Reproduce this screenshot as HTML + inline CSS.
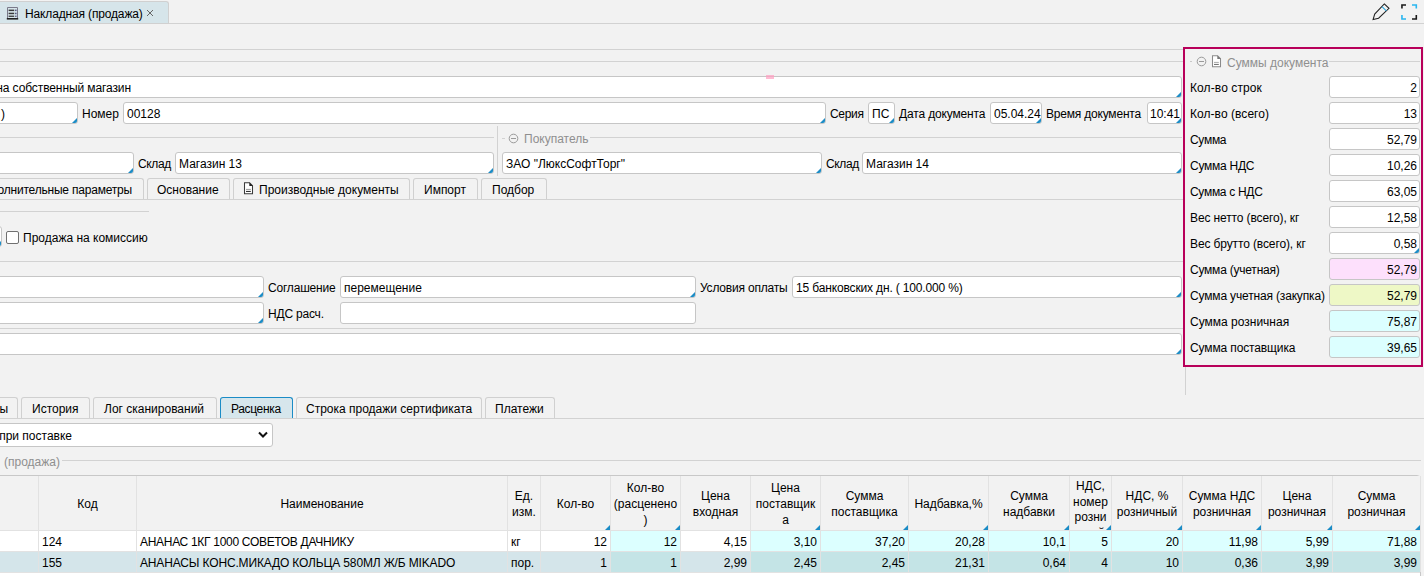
<!DOCTYPE html><html><head><meta charset="utf-8"><style>
*{box-sizing:border-box;margin:0;padding:0}
html,body{width:1424px;height:576px;overflow:hidden;background:#f2f2f2}
body{font-family:"Liberation Sans",sans-serif;font-size:12px;color:#000;position:relative}
.a{position:absolute}
.f{position:absolute;border:1px solid #c6c6c6;border-radius:3px;white-space:nowrap;overflow:hidden;padding-top:1px!important}
.c{position:absolute;right:0;bottom:0;width:0;height:0;border-style:solid;border-width:0 0 5px 5px;border-color:transparent transparent #1b8cc6 transparent}
.l{position:absolute;white-space:nowrap;line-height:16px;height:16px}
.tab{position:absolute;border:1px solid #d0d0d0;border-bottom:none;border-radius:3px 3px 0 0;background:#f2f2f2}
.tab.act{border-color:#1b8cc6;background:#d6e6ec}
.g{color:#8f8f8f}
td,th{font-weight:normal}
</style></head><body>
<div class="a" style="left:-6px;top:1px;width:175px;height:23px;background:#d6e5ea;border:1px solid #d0d0d0;border-bottom:none;border-radius:0 3px 0 0"></div><svg class="a" style="left:6px;top:7px" width="13" height="13" viewBox="0 0 13 13">
<path d="M1.5 11.5V0.5H11.5V11.5" fill="none" stroke="#7a7a8a" stroke-width="1"/>
<rect x="2.6" y="2.6" width="5.6" height="1.5" fill="#3a3a3a"/><rect x="9.2" y="2.6" width="1.3" height="1.5" fill="#3a3a6a"/>
<rect x="2.6" y="5.7" width="5.6" height="1.5" fill="#3a3a3a"/><rect x="9.2" y="5.7" width="1.3" height="1.5" fill="#3a3a6a"/>
<rect x="2.6" y="8.6" width="5.6" height="1.3" fill="#3a3a3a"/><rect x="9.2" y="8.6" width="1.3" height="1.3" fill="#3a3a6a"/>
<rect x="0.8" y="11" width="11.4" height="1.6" fill="#222"/>
</svg><div class="l" style="left:25px;top:6px;color:#000;letter-spacing:-0.15px">Накладная (продажа)</div><svg class="a" style="left:146px;top:9px" width="8" height="8" viewBox="0 0 8 8"><path d="M1 1L7 7M7 1L1 7" stroke="#666" stroke-width="1"/></svg><div class="a" style="left:169px;top:23px;width:1255px;height:1px;background:#d2d2d2"></div><div class="a" style="left:0px;top:23px;width:169px;height:1px;background:#d0d0d0"></div><svg class="a" style="left:1372px;top:3px" width="19" height="18" viewBox="0 0 19 18">
<path d="M12.3 0.9 L17 5.3 L6.6 15.2 L1.1 16.5 L2.7 11.1 Z" fill="none" stroke="#222" stroke-width="1.05" stroke-linejoin="miter"/>
<path d="M10 3.6 L14.3 7.8" stroke="#29a8e0" stroke-width="1.05"/>
</svg><svg class="a" style="left:1400px;top:3px" width="19" height="18" viewBox="0 0 19 18">
<path d="M1.95 5.6 V1.95 H6" fill="none" stroke="#1a1a1a" stroke-width="1.6"/>
<path d="M12 1.95 H16.3 V5.6" fill="none" stroke="#29b6f0" stroke-width="1.6"/>
<path d="M1.95 12.1 V16.05 H6" fill="none" stroke="#29b6f0" stroke-width="1.6"/>
<path d="M12 16.05 H16.3 V12.1" fill="none" stroke="#1a1a1a" stroke-width="1.6"/>
</svg><div class="a" style="left:0px;top:49px;width:1183px;height:1px;background:#d2d2d2"></div><div class="a" style="left:0px;top:61px;width:1183px;height:1px;background:#d2d2d2"></div><div class="f" style="left:-3px;top:76px;width:1185px;height:22px;background:#fff;line-height:20px;text-align:left;padding:0 3px;"><i class="c"></i></div><div class="l" style="right:1293px;top:80px;letter-spacing:-0.1px">на собственный магазин</div><div class="a" style="left:766px;top:75px;width:8px;height:4px;background:#ff9ec0;opacity:.7"></div><div class="f" style="left:-3px;top:102px;width:81px;height:22px;background:#fff;line-height:20px;text-align:left;padding:0 3px;"><i class="c"></i></div><div class="l" style="left:1px;top:106px;color:#000;">)</div><div class="l" style="left:82px;top:106px;color:#000;">Номер</div><div class="f" style="left:123px;top:102px;width:703px;height:22px;background:#fff;line-height:20px;text-align:left;padding:0 3px;">00128<i class="c"></i></div><div class="l" style="left:830px;top:106px;color:#000;letter-spacing:-0.3px">Серия</div><div class="f" style="left:868px;top:102px;width:27px;height:22px;background:#fff;line-height:20px;text-align:left;padding:0 3px;">ПС<i class="c"></i></div><div class="l" style="left:899px;top:106px;color:#000;letter-spacing:-0.15px">Дата документа</div><div class="f" style="left:990px;top:102px;width:52px;height:22px;background:#fff;line-height:20px;text-align:left;padding:0 3px;">05.04.24<i class="c"></i></div><div class="l" style="left:1046px;top:106px;color:#000;letter-spacing:-0.2px">Время документа</div><div class="f" style="left:1147px;top:102px;width:35px;height:22px;background:#fff;line-height:20px;text-align:left;padding:0 2px;">10:41<i class="c"></i></div><div class="a" style="left:0px;top:137px;width:494px;height:1px;background:#d2d2d2"></div><div class="a" style="left:497px;top:126px;width:1px;height:50px;background:#d2d2d2"></div><div class="a" style="left:502px;top:138px;width:3px;height:1px;background:#d2d2d2"></div><svg class="a" style="left:508px;top:133px" width="11" height="11" viewBox="0 0 11 11"><circle cx="5.5" cy="5.5" r="4.3" fill="none" stroke="#9a9a9a" stroke-width="1"/><path d="M3 5.5H8" stroke="#9a9a9a" stroke-width="1"/></svg><div class="l" style="left:524px;top:131px;color:#8f8f8f;">Покупатель</div><div class="a" style="left:590px;top:137px;width:592px;height:1px;background:#d2d2d2"></div><div class="f" style="left:-3px;top:152px;width:137px;height:22px;background:#fff;line-height:20px;text-align:left;padding:0 3px;"><i class="c"></i></div><div class="l" style="left:138px;top:156px;color:#000;letter-spacing:-0.35px">Склад</div><div class="f" style="left:175px;top:152px;width:319px;height:22px;background:#fff;line-height:20px;text-align:left;padding:0 3px;">Магазин 13<i class="c"></i></div><div class="f" style="left:502px;top:152px;width:320px;height:22px;background:#fff;line-height:20px;text-align:left;padding:0 3px;">ЗАО "ЛюксСофтТорг"<i class="c"></i></div><div class="l" style="left:826px;top:156px;color:#000;letter-spacing:-0.35px">Склад</div><div class="f" style="left:862px;top:152px;width:320px;height:22px;background:#fff;line-height:20px;text-align:left;padding:0 3px;">Магазин 14<i class="c"></i></div><div class="tab" style="left:-3px;top:178px;width:147px;height:22px"></div><div class="l" style="right:1292px;top:182px;letter-spacing:-0.2px">Дополнительные параметры</div><div class="tab" style="left:147px;top:178px;width:83px;height:22px"></div><div class="l" style="left:157px;top:182px;color:#000;">Основание</div><div class="tab" style="left:233px;top:178px;width:177px;height:22px"></div><svg class="a" style="left:243px;top:182px" width="11" height="13" viewBox="0 0 11 13">
<path d="M1.5 0.7H6.6L9.5 3.6V11.8H1.5Z" fill="#fff" stroke="#3a3a3a" stroke-width="1.05"/><path d="M6.3 0.4V3.9H9.8Z" fill="#222"/>
<rect x="3" y="6.9" width="4.8" height="1" fill="#999"/><rect x="3" y="8.9" width="4.8" height="1.1" fill="#333"/></svg><div class="l" style="left:259px;top:182px;color:#000;">Производные документы</div><div class="tab" style="left:413px;top:178px;width:65px;height:22px"></div><div class="l" style="left:424px;top:182px;color:#000;">Импорт</div><div class="tab" style="left:481px;top:178px;width:66px;height:22px"></div><div class="l" style="left:492px;top:182px;color:#000;">Подбор</div><div class="a" style="left:0px;top:199px;width:1183px;height:1px;background:#d2d2d2"></div><div class="a" style="left:0px;top:211px;width:149px;height:1px;background:#d2d2d2"></div><div class="f" style="left:-12px;top:226px;width:14px;height:21px;background:#fff;line-height:19px;text-align:left;padding:0 3px;"><i class="c"></i></div><div class="a" style="left:6px;top:231px;width:13px;height:13px;border:1px solid #707070;border-radius:2px;background:#fff"></div><div class="l" style="left:23px;top:230px;color:#000;">Продажа на комиссию</div><div class="a" style="left:0px;top:261px;width:1183px;height:1px;background:#d2d2d2"></div><div class="f" style="left:-3px;top:276px;width:267px;height:22px;background:#fff;line-height:20px;text-align:left;padding:0 3px;"><i class="c"></i></div><div class="l" style="left:268px;top:280px;color:#000;letter-spacing:-0.2px">Соглашение</div><div class="f" style="left:340px;top:276px;width:356px;height:22px;background:#fff;line-height:20px;text-align:left;padding:0 3px;">перемещение<i class="c"></i></div><div class="l" style="left:700px;top:280px;color:#000;letter-spacing:-0.2px">Условия оплаты</div><div class="f" style="left:792px;top:276px;width:390px;height:22px;background:#fff;line-height:20px;text-align:left;padding:0 3px;"><span style="letter-spacing:-0.15px">15 банковских дн. ( 100.000 %)</span><i class="c"></i></div><div class="f" style="left:-3px;top:302px;width:267px;height:22px;background:#fff;line-height:20px;text-align:left;padding:0 3px;"><i class="c"></i></div><div class="l" style="left:268px;top:306px;color:#000;letter-spacing:-0.2px">НДС расч.</div><div class="f" style="left:340px;top:302px;width:356px;height:22px;background:#fff;line-height:20px;text-align:left;padding:0 3px;"></div><div class="a" style="left:0px;top:328px;width:1183px;height:1px;background:#d2d2d2"></div><div class="f" style="left:-3px;top:333px;width:1185px;height:22px;background:#fff;line-height:20px;text-align:left;padding:0 3px;"><i class="c"></i></div><div class="a" style="left:1185px;top:366px;width:1px;height:29px;background:#d2d2d2"></div><div class="tab" style="left:-3px;top:397px;width:21px;height:22px"></div><div class="l" style="right:1416px;top:401px;">ы</div><div class="tab" style="left:21px;top:397px;width:69px;height:22px"></div><div class="l" style="left:32px;top:401px;color:#000;">История</div><div class="tab" style="left:93px;top:397px;width:124px;height:22px"></div><div class="l" style="left:104px;top:401px;color:#000;">Лог сканирований</div><div class="tab act" style="left:220px;top:397px;width:73px;height:22px"></div><div class="l" style="left:231px;top:401px;color:#000;letter-spacing:-0.35px">Расценка</div><div class="tab" style="left:296px;top:397px;width:186px;height:22px"></div><div class="l" style="left:306px;top:401px;color:#000;">Строка продажи сертификата</div><div class="tab" style="left:485px;top:397px;width:70px;height:22px"></div><div class="l" style="left:495px;top:401px;color:#000;">Платежи</div><div class="a" style="left:0px;top:418px;width:1424px;height:1px;background:#d2d2d2"></div><div class="f" style="left:-3px;top:423px;width:276px;height:24px;background:#fff;line-height:22px;text-align:left;padding:0 3px;"></div><div class="l" style="right:1352px;top:428px;">при поставке</div><svg class="a" style="left:258px;top:431px" width="10" height="8" viewBox="0 0 10 8"><path d="M1 1.5L5 5.5L9 1.5" fill="none" stroke="#111" stroke-width="2"/></svg><div class="l" style="left:4px;top:454px;color:#8f8f8f;">(продажа)</div><div class="a" style="left:62px;top:460px;width:1359px;height:1px;background:#d2d2d2"></div><div class="a" style="left:1183px;top:47px;width:240px;height:320px;border:2px solid #b8005a"></div><div class="a" style="left:1190px;top:61px;width:2px;height:1px;background:#c8c8c8"></div><svg class="a" style="left:1196px;top:56px" width="11" height="11" viewBox="0 0 11 11"><circle cx="5.5" cy="5.5" r="4.3" fill="none" stroke="#9a9a9a" stroke-width="1"/><path d="M3 5.5H8" stroke="#9a9a9a" stroke-width="1"/></svg><svg class="a" style="left:1211px;top:55px" width="11" height="13" viewBox="0 0 11 13">
<path d="M1.5 0.7H6.6L9.5 3.6V11.8H1.5Z" fill="#fff" stroke="#8a8a8a" stroke-width="1.05"/><path d="M6.3 0.4V3.9H9.8Z" fill="#777"/>
<rect x="3" y="6.9" width="4.8" height="1" fill="#aaa"/><rect x="3" y="8.9" width="4.8" height="1.1" fill="#777"/></svg><div class="l" style="left:1227px;top:55px;color:#8f8f8f;">Суммы документа</div><div class="a" style="left:1329px;top:61px;width:91px;height:1px;background:#d2d2d2"></div><div class="l" style="left:1190px;top:80px;color:#000;letter-spacing:0.1px">Кол-во строк</div><div class="f" style="left:1329px;top:76px;width:91px;height:22px;background:#fff;line-height:20px;text-align:right;padding:0 2px;">2</div><div class="l" style="left:1190px;top:106px;color:#000;letter-spacing:0.05px">Кол-во (всего)</div><div class="f" style="left:1329px;top:102px;width:91px;height:22px;background:#fff;line-height:20px;text-align:right;padding:0 2px;">13</div><div class="l" style="left:1190px;top:132px;color:#000;letter-spacing:-0.3px">Сумма</div><div class="f" style="left:1329px;top:128px;width:91px;height:22px;background:#fff;line-height:20px;text-align:right;padding:0 2px;">52,79</div><div class="l" style="left:1190px;top:158px;color:#000;letter-spacing:-0.25px">Сумма НДС</div><div class="f" style="left:1329px;top:154px;width:91px;height:22px;background:#fff;line-height:20px;text-align:right;padding:0 2px;">10,26</div><div class="l" style="left:1190px;top:184px;color:#000;letter-spacing:-0.3px">Сумма с НДС</div><div class="f" style="left:1329px;top:180px;width:91px;height:22px;background:#fff;line-height:20px;text-align:right;padding:0 2px;">63,05</div><div class="l" style="left:1190px;top:210px;color:#000;letter-spacing:-0.12px">Вес нетто (всего), кг</div><div class="f" style="left:1329px;top:206px;width:91px;height:22px;background:#fff;line-height:20px;text-align:right;padding:0 2px;">12,58</div><div class="l" style="left:1190px;top:236px;color:#000;letter-spacing:-0.12px">Вес брутто (всего), кг</div><div class="f" style="left:1329px;top:232px;width:91px;height:22px;background:#fff;line-height:20px;text-align:right;padding:0 2px;">0,58<i class="c"></i></div><div class="l" style="left:1190px;top:262px;color:#000;letter-spacing:-0.22px">Сумма (учетная)</div><div class="f" style="left:1329px;top:258px;width:91px;height:22px;background:#fde0fc;line-height:20px;text-align:right;padding:0 2px;">52,79</div><div class="l" style="left:1190px;top:288px;color:#000;letter-spacing:-0.16px">Сумма учетная (закупка)</div><div class="f" style="left:1329px;top:284px;width:91px;height:22px;background:#eef8c6;line-height:20px;text-align:right;padding:0 2px;">52,79</div><div class="l" style="left:1190px;top:314px;color:#000;letter-spacing:0.0px">Сумма розничная</div><div class="f" style="left:1329px;top:310px;width:91px;height:22px;background:#dcffff;line-height:20px;text-align:right;padding:0 2px;">75,87</div><div class="l" style="left:1190px;top:340px;color:#000;letter-spacing:-0.13px">Сумма поставщика</div><div class="f" style="left:1329px;top:336px;width:91px;height:22px;background:#dcffff;line-height:20px;text-align:right;padding:0 2px;">39,65</div><div class="a" style="left:-10px;top:475px;width:1431px;height:110px;background:#fff;border:1px solid #c8c8c8;border-radius:0 4px 0 0"></div><div class="a" style="left:0;top:476px;width:1420px;height:55px;background:#f2f2f2"></div><div class="a" style="left:-39px;top:476px;width:77px;height:54px;padding-top:2px;display:flex;align-items:center;justify-content:center;text-align:center;line-height:16px;overflow:hidden"></div><div class="a" style="left:-39px;top:531px;width:77px;height:20px;background:#fff;line-height:20px;text-align:right;padding:1px 3px 0;white-space:nowrap;overflow:hidden"></div><div class="a" style="left:-39px;top:552px;width:77px;height:20px;background:#d4e5ea;line-height:20px;text-align:right;padding:1px 3px 0;white-space:nowrap;overflow:hidden"></div><div class="a" style="left:38px;top:476px;width:1px;height:96px;background:#e2e2e2"></div><div class="a" style="left:39px;top:476px;width:97px;height:54px;padding-top:2px;display:flex;align-items:center;justify-content:center;text-align:center;line-height:16px;overflow:hidden">Код</div><div class="a" style="left:39px;top:531px;width:97px;height:20px;background:#fff;line-height:20px;text-align:left;padding:1px 3px 0;white-space:nowrap;overflow:hidden">124</div><div class="a" style="left:39px;top:552px;width:97px;height:20px;background:#d4e5ea;line-height:20px;text-align:left;padding:1px 3px 0;white-space:nowrap;overflow:hidden">155</div><div class="a" style="left:136px;top:476px;width:1px;height:96px;background:#e2e2e2"></div><div class="a" style="left:137px;top:476px;width:370px;height:54px;padding-top:2px;display:flex;align-items:center;justify-content:center;text-align:center;line-height:16px;overflow:hidden">Наименование</div><div class="a" style="left:137px;top:531px;width:370px;height:20px;background:#fff;line-height:20px;text-align:left;padding:1px 3px 0;white-space:nowrap;overflow:hidden"><span style="letter-spacing:-0.3px">АНАНАС 1КГ 1000 СОВЕТОВ ДАЧНИКУ</span></div><div class="a" style="left:137px;top:552px;width:370px;height:20px;background:#d4e5ea;line-height:20px;text-align:left;padding:1px 3px 0;white-space:nowrap;overflow:hidden"><span style="letter-spacing:-0.15px">АНАНАСЫ КОНС.МИКАДО КОЛЬЦА 580МЛ Ж/Б MIKADO</span></div><div class="a" style="left:507px;top:476px;width:1px;height:96px;background:#e2e2e2"></div><div class="a" style="left:508px;top:476px;width:32px;height:54px;padding-top:2px;display:flex;align-items:center;justify-content:center;text-align:center;line-height:16px;overflow:hidden">Ед.<br>изм.</div><div class="a" style="left:508px;top:531px;width:32px;height:20px;background:#fff;line-height:20px;text-align:left;padding:1px 3px 0;white-space:nowrap;overflow:hidden">кг</div><div class="a" style="left:508px;top:552px;width:32px;height:20px;background:#d4e5ea;line-height:20px;text-align:left;padding:1px 3px 0;white-space:nowrap;overflow:hidden">пор.</div><div class="a" style="left:540px;top:476px;width:1px;height:96px;background:#e2e2e2"></div><div class="a" style="left:541px;top:476px;width:69px;height:54px;padding-top:2px;display:flex;align-items:center;justify-content:center;text-align:center;line-height:16px;overflow:hidden">Кол-во</div><i class="c" style="left:605px;top:525px;right:auto;bottom:auto"></i><div class="a" style="left:541px;top:531px;width:69px;height:20px;background:#fff;line-height:20px;text-align:right;padding:1px 3px 0;white-space:nowrap;overflow:hidden">12</div><div class="a" style="left:541px;top:552px;width:69px;height:20px;background:#d4e5ea;line-height:20px;text-align:right;padding:1px 3px 0;white-space:nowrap;overflow:hidden">1</div><div class="a" style="left:610px;top:476px;width:1px;height:96px;background:#e2e2e2"></div><div class="a" style="left:611px;top:476px;width:69px;height:54px;padding-top:2px;display:flex;align-items:center;justify-content:center;text-align:center;line-height:16px;overflow:hidden">Кол-во<br>(расценено<br>)</div><i class="c" style="left:675px;top:525px;right:auto;bottom:auto"></i><div class="a" style="left:611px;top:531px;width:69px;height:20px;background:#dcffff;line-height:20px;text-align:right;padding:1px 3px 0;white-space:nowrap;overflow:hidden">12</div><div class="a" style="left:611px;top:552px;width:69px;height:20px;background:#c4e4e6;line-height:20px;text-align:right;padding:1px 3px 0;white-space:nowrap;overflow:hidden">1</div><div class="a" style="left:680px;top:476px;width:1px;height:96px;background:#e2e2e2"></div><div class="a" style="left:681px;top:476px;width:69px;height:54px;padding-top:2px;display:flex;align-items:center;justify-content:center;text-align:center;line-height:16px;overflow:hidden">Цена<br>входная</div><div class="a" style="left:681px;top:531px;width:69px;height:20px;background:#fff;line-height:20px;text-align:right;padding:1px 3px 0;white-space:nowrap;overflow:hidden">4,15</div><div class="a" style="left:681px;top:552px;width:69px;height:20px;background:#d4e5ea;line-height:20px;text-align:right;padding:1px 3px 0;white-space:nowrap;overflow:hidden">2,99</div><div class="a" style="left:750px;top:476px;width:1px;height:96px;background:#e2e2e2"></div><div class="a" style="left:751px;top:476px;width:69px;height:54px;padding-top:2px;display:flex;align-items:center;justify-content:center;text-align:center;line-height:16px;overflow:hidden">Цена<br>поставщик<br>а</div><i class="c" style="left:815px;top:525px;right:auto;bottom:auto"></i><div class="a" style="left:751px;top:531px;width:69px;height:20px;background:#dcffff;line-height:20px;text-align:right;padding:1px 3px 0;white-space:nowrap;overflow:hidden">3,10</div><div class="a" style="left:751px;top:552px;width:69px;height:20px;background:#c4e4e6;line-height:20px;text-align:right;padding:1px 3px 0;white-space:nowrap;overflow:hidden">2,45</div><div class="a" style="left:820px;top:476px;width:1px;height:96px;background:#e2e2e2"></div><div class="a" style="left:821px;top:476px;width:87px;height:54px;padding-top:2px;display:flex;align-items:center;justify-content:center;text-align:center;line-height:16px;overflow:hidden">Сумма<br>поставщика</div><i class="c" style="left:903px;top:525px;right:auto;bottom:auto"></i><div class="a" style="left:821px;top:531px;width:87px;height:20px;background:#dcffff;line-height:20px;text-align:right;padding:1px 3px 0;white-space:nowrap;overflow:hidden">37,20</div><div class="a" style="left:821px;top:552px;width:87px;height:20px;background:#c4e4e6;line-height:20px;text-align:right;padding:1px 3px 0;white-space:nowrap;overflow:hidden">2,45</div><div class="a" style="left:908px;top:476px;width:1px;height:96px;background:#e2e2e2"></div><div class="a" style="left:909px;top:476px;width:79px;height:54px;padding-top:2px;display:flex;align-items:center;justify-content:center;text-align:center;line-height:16px;overflow:hidden">Надбавка,%</div><i class="c" style="left:983px;top:525px;right:auto;bottom:auto"></i><div class="a" style="left:909px;top:531px;width:79px;height:20px;background:#dcffff;line-height:20px;text-align:right;padding:1px 3px 0;white-space:nowrap;overflow:hidden">20,28</div><div class="a" style="left:909px;top:552px;width:79px;height:20px;background:#c4e4e6;line-height:20px;text-align:right;padding:1px 3px 0;white-space:nowrap;overflow:hidden">21,31</div><div class="a" style="left:988px;top:476px;width:1px;height:96px;background:#e2e2e2"></div><div class="a" style="left:989px;top:476px;width:80px;height:54px;padding-top:2px;display:flex;align-items:center;justify-content:center;text-align:center;line-height:16px;overflow:hidden">Сумма<br>надбавки</div><i class="c" style="left:1064px;top:525px;right:auto;bottom:auto"></i><div class="a" style="left:989px;top:531px;width:80px;height:20px;background:#dcffff;line-height:20px;text-align:right;padding:1px 3px 0;white-space:nowrap;overflow:hidden">10,1</div><div class="a" style="left:989px;top:552px;width:80px;height:20px;background:#c4e4e6;line-height:20px;text-align:right;padding:1px 3px 0;white-space:nowrap;overflow:hidden">0,64</div><div class="a" style="left:1069px;top:476px;width:1px;height:96px;background:#e2e2e2"></div><div class="a" style="left:1070px;top:476px;width:41px;height:54px;padding-top:3px;text-align:center;line-height:15.7px;overflow:hidden">НДС,<br>номер<br>розни<br>чный</div><i class="c" style="left:1106px;top:525px;right:auto;bottom:auto"></i><div class="a" style="left:1070px;top:531px;width:41px;height:20px;background:#dcffff;line-height:20px;text-align:right;padding:1px 3px 0;white-space:nowrap;overflow:hidden">5</div><div class="a" style="left:1070px;top:552px;width:41px;height:20px;background:#c4e4e6;line-height:20px;text-align:right;padding:1px 3px 0;white-space:nowrap;overflow:hidden">4</div><div class="a" style="left:1111px;top:476px;width:1px;height:96px;background:#e2e2e2"></div><div class="a" style="left:1112px;top:476px;width:70px;height:54px;padding-top:2px;display:flex;align-items:center;justify-content:center;text-align:center;line-height:16px;overflow:hidden">НДС, %<br>розничный</div><i class="c" style="left:1177px;top:525px;right:auto;bottom:auto"></i><div class="a" style="left:1112px;top:531px;width:70px;height:20px;background:#dcffff;line-height:20px;text-align:right;padding:1px 3px 0;white-space:nowrap;overflow:hidden">20</div><div class="a" style="left:1112px;top:552px;width:70px;height:20px;background:#c4e4e6;line-height:20px;text-align:right;padding:1px 3px 0;white-space:nowrap;overflow:hidden">10</div><div class="a" style="left:1182px;top:476px;width:1px;height:96px;background:#e2e2e2"></div><div class="a" style="left:1183px;top:476px;width:78px;height:54px;padding-top:2px;display:flex;align-items:center;justify-content:center;text-align:center;line-height:16px;overflow:hidden">Сумма НДС<br>розничная</div><i class="c" style="left:1256px;top:525px;right:auto;bottom:auto"></i><div class="a" style="left:1183px;top:531px;width:78px;height:20px;background:#dcffff;line-height:20px;text-align:right;padding:1px 3px 0;white-space:nowrap;overflow:hidden">11,98</div><div class="a" style="left:1183px;top:552px;width:78px;height:20px;background:#c4e4e6;line-height:20px;text-align:right;padding:1px 3px 0;white-space:nowrap;overflow:hidden">0,36</div><div class="a" style="left:1261px;top:476px;width:1px;height:96px;background:#e2e2e2"></div><div class="a" style="left:1262px;top:476px;width:70px;height:54px;padding-top:2px;display:flex;align-items:center;justify-content:center;text-align:center;line-height:16px;overflow:hidden">Цена<br>розничная</div><i class="c" style="left:1327px;top:525px;right:auto;bottom:auto"></i><div class="a" style="left:1262px;top:531px;width:70px;height:20px;background:#dcffff;line-height:20px;text-align:right;padding:1px 3px 0;white-space:nowrap;overflow:hidden">5,99</div><div class="a" style="left:1262px;top:552px;width:70px;height:20px;background:#c4e4e6;line-height:20px;text-align:right;padding:1px 3px 0;white-space:nowrap;overflow:hidden">3,99</div><div class="a" style="left:1332px;top:476px;width:1px;height:96px;background:#e2e2e2"></div><div class="a" style="left:1333px;top:476px;width:87px;height:54px;padding-top:2px;display:flex;align-items:center;justify-content:center;text-align:center;line-height:16px;overflow:hidden">Сумма<br>розничная</div><i class="c" style="left:1415px;top:525px;right:auto;bottom:auto"></i><div class="a" style="left:1333px;top:531px;width:87px;height:20px;background:#dcffff;line-height:20px;text-align:right;padding:1px 3px 0;white-space:nowrap;overflow:hidden">71,88</div><div class="a" style="left:1333px;top:552px;width:87px;height:20px;background:#c4e4e6;line-height:20px;text-align:right;padding:1px 3px 0;white-space:nowrap;overflow:hidden">3,99</div><div class="a" style="left:1420px;top:476px;width:1px;height:96px;background:#e2e2e2"></div><div class="a" style="left:0px;top:530px;width:1420px;height:1px;background:#e2e2e2"></div><div class="a" style="left:0px;top:551px;width:1420px;height:1px;background:#e2e2e2"></div><div class="a" style="left:0px;top:572px;width:1420px;height:1px;background:#e2e2e2"></div></body></html>
